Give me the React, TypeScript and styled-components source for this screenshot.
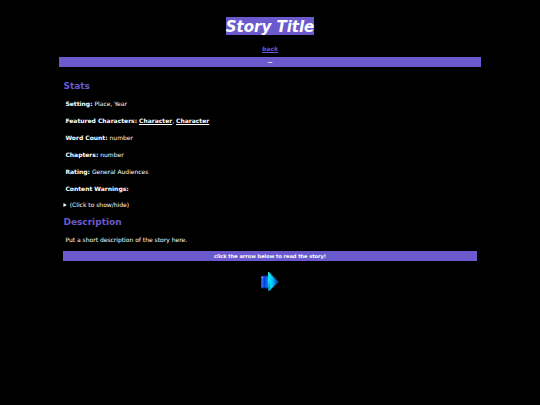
import React from "react";
import styled, { createGlobalStyle } from "styled-components";

const slate = "#6a5acd";

const GlobalStyle = createGlobalStyle`
  html, body { margin: 0; background: #000; }
  body {
    color: #fff;
    font-family: "DejaVu Sans", Verdana, sans-serif;
    font-size: 6px;
    line-height: 8px;
  }
`;

const Page = styled.div`
  width: 78%;
  margin: 0 auto;
  padding-top: 17px;
`;

const Header = styled.header`
  display: flex;
  flex-direction: column;
  align-items: center;
`;

const Title = styled.h1`
  margin: 0 0 10px;
  padding-top: 2px;
  background: ${slate};
  font-size: 15px;
  line-height: 16px;
  font-style: italic;
`;

const BackLink = styled.a`
  margin-bottom: 4px;
  color: ${slate};
  font-weight: bold;
  font-style: italic;
`;

const Bar = styled.div<{ $small?: boolean }>`
  align-self: stretch;
  background: ${slate};
  font-size: ${({ $small }) => ($small ? "5px" : "6px")};
  font-weight: bold;
  line-height: 10px;
  text-align: center;
`;

const Content = styled.main`
  padding: 0 4px;
`;

const Heading = styled.h2`
  margin: 0;
  color: ${slate};
  font-size: 9px;
  line-height: 12px;
`;

const Stats = styled.section`
  padding-top: 13px;
`;

const Facts = styled.dl`
  display: grid;
  gap: 9px;
  margin: 0;
  padding: 8px 2px 0;
`;

const Fact = styled.div`
  dt, dd { display: inline; margin: 0; }
  dt { font-weight: bold; }
`;

const CharacterLink = styled.a`
  color: #fff;
  font-weight: bold;
`;

const Warnings = styled.details`
  margin: 8px 0 7px;

  summary { cursor: pointer; }
`;

const Description = styled.p`
  margin: 8px 2px 7px;
`;

const NextLink = styled.a`
  display: block;
  width: 18px;
  margin: 11px auto 0;

  svg { display: block; }
`;

const Arrow = () => (
  <svg width="18" height="20" viewBox="0 0 18 20" aria-hidden="true">
    <defs>
      <linearGradient id="body" x1="0" x2="1">
        <stop offset="0" stopColor="#124ce8" />
        <stop offset="0.08" stopColor="#2864ff" />
        <stop offset="0.2" stopColor="#073fd8" />
        <stop offset="0.36" stopColor="#087cff" />
        <stop offset="0.5" stopColor="#00dfff" />
        <stop offset="0.65" stopColor="#08bff5" />
        <stop offset="0.8" stopColor="#0870d0" />
        <stop offset="1" stopColor="#04245c" />
      </linearGradient>
      <linearGradient id="edge" x1="0" x2="0" y1="0" y2="1">
        <stop offset="0" stopColor="#20d8c0" />
        <stop offset="0.45" stopColor="#18dfff" />
        <stop offset="1" stopColor="#087c88" />
      </linearGradient>
    </defs>
    <path d="M0 4H7V0H8L18 10L8 19H7V16H0Z" fill="url(#body)" />
    <path d="M7 0H8L9 3V16L8 19H7Z" fill="url(#edge)" />
    <path d="M0 4H7M0 16H7" stroke="#063080" />
    <path d="M1 5H2V6H1Z" fill="#a7d8ff" />
    <path d="M10 3L17 10L10 17" fill="none" stroke="#064b78" strokeOpacity="0.6" />
  </svg>
);

const facts: { label: string; value?: React.ReactNode }[] = [
  { label: "Setting:", value: "Place, Year" },
  {
    label: "Featured Characters:",
    value: (
      <>
        <CharacterLink href="#character-1">Character</CharacterLink>,{" "}
        <CharacterLink href="#character-2">Character</CharacterLink>
      </>
    ),
  },
  { label: "Word Count:", value: "number" },
  { label: "Chapters:", value: "number" },
  { label: "Rating:", value: "General Audiences" },
  { label: "Content Warnings:" },
];

export default function App() {
  return (
    <>
      <GlobalStyle />
      <Page>
        <Header>
          <Title>Story Title</Title>
          <BackLink href="#back">back</BackLink>
          <Bar $small>—</Bar>
        </Header>
        <Content>
          <Stats>
            <Heading>Stats</Heading>
            <Facts>
              {facts.map(({ label, value }) => (
                <Fact key={label}>
                  <dt>{label}</dt> {value && <dd>{value}</dd>}
                </Fact>
              ))}
            </Facts>
            <Warnings>
              <summary>(Click to show/hide)</summary>
            </Warnings>
          </Stats>
          <section>
            <Heading>Description</Heading>
            <Description>Put a short description of the story here.</Description>
            <Bar $small>click the arrow below to read the story!</Bar>
          </section>
          <NextLink href="#chapter-1" aria-label="Read the story">
            <Arrow />
          </NextLink>
        </Content>
      </Page>
    </>
  );
}
